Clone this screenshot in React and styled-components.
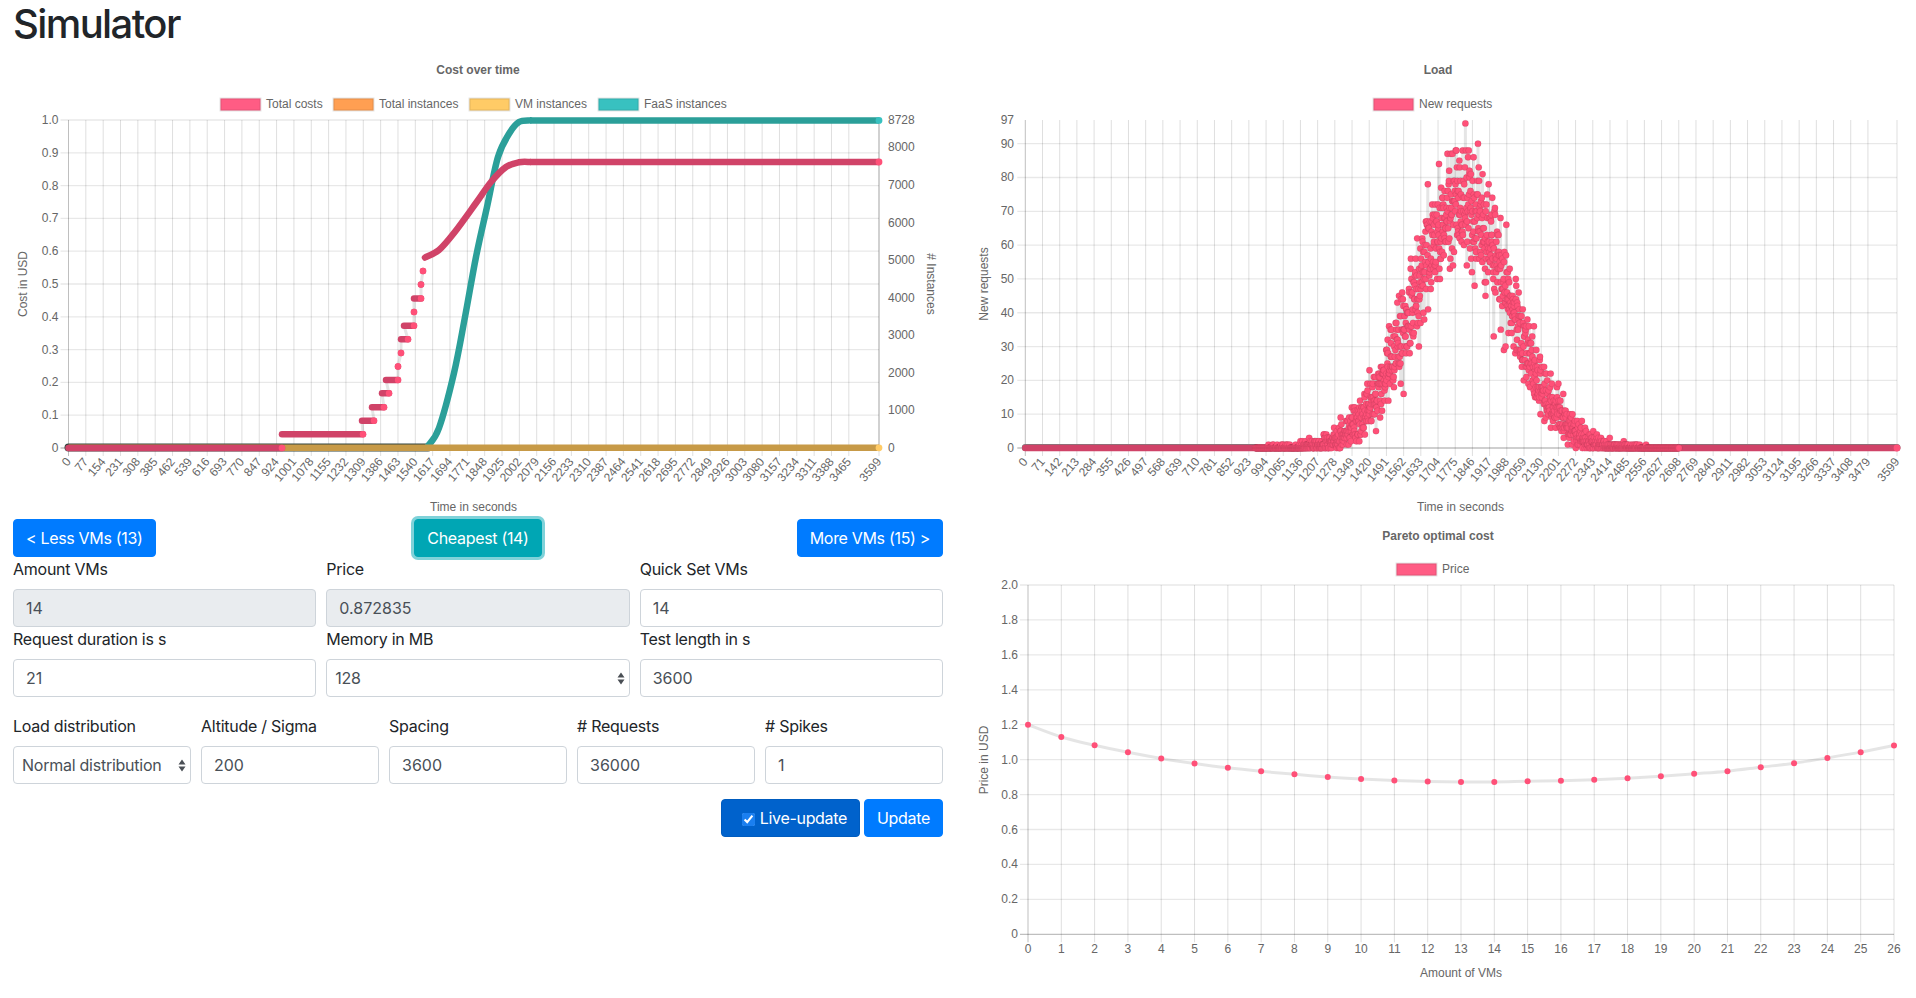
import React from 'react'
import styled, { createGlobalStyle } from 'styled-components'

const GlobalStyle = createGlobalStyle`
  * { box-sizing: border-box; }
  body {
    margin: 0;
    background: #fff;
    color: #212529;
    font-family: Inter, "Noto Sans", sans-serif;
    font-size: 16px;
  }
`

const Page = styled.div`
  display: grid;
  grid-template-columns: 930px 926px;
  column-gap: 31px;
  padding: 0 16px 0 13px;
`

const LeftCol = styled.div`
  display: flex;
  flex-direction: column;
`

const RightCol = styled.div`
  display: flex;
  flex-direction: column;
  padding-top: 56px;
`

const Title = styled.h1`
  margin: 0 0 8px;
  font-size: 40px;
  line-height: 48px;
  font-weight: 500;
  letter-spacing: -1.6px;
`

const ChartSvg = styled.svg`
  display: block;
  overflow: visible;
`

const ChartTitle = styled.text`
  font: bold 12px "Liberation Sans", Arial, sans-serif;
  fill: #666;
  text-anchor: middle;
`

const ChartLabel = styled.text`
  font: 12px "Liberation Sans", Arial, sans-serif;
  fill: #666;
  text-anchor: ${(p) => p.$anchor || 'middle'};
`

const ButtonRow = styled.div`
  display: grid;
  grid-template-columns: 1fr auto 1fr;
  align-items: center;
  height: 38px;
`

const Btn = styled.button`
  height: 38px;
  padding: 0 12px;
  border: 1px solid ${(p) => (p.$variant === 'teal' ? '#00a6b4' : p.$variant === 'active' ? '#005cbf' : '#007bff')};
  border-radius: 4px;
  background: ${(p) => (p.$variant === 'teal' ? '#00a6b4' : p.$variant === 'active' ? '#0062cc' : '#007bff')};
  box-shadow: ${(p) => (p.$variant === 'teal' ? '0 0 0 3px rgba(0, 166, 180, 0.5)' : 'none')};
  color: #fff;
  font: 400 16px/24px Inter, "Noto Sans", sans-serif;
  letter-spacing: -0.32px;
  justify-self: ${(p) => p.$side || 'center'};
  display: inline-flex;
  align-items: center;
  white-space: nowrap;
`

const FieldGrid = styled.div`
  display: grid;
  grid-template-columns: repeat(${(p) => p.$cols}, 1fr);
  column-gap: 10px;
  margin-top: ${(p) => p.$top || 0}px;
`

const Field = styled.div`
  display: flex;
  flex-direction: column;
  min-width: 0;
`

const Label = styled.label`
  display: block;
  margin-bottom: 8px;
  line-height: 24px;
  letter-spacing: -0.25px;
`

const Input = styled.input`
  width: 100%;
  height: 38px;
  padding: 6px 12px;
  border: 1px solid #ced4da;
  border-radius: 4px;
  background: ${(p) => (p.disabled ? '#e9ecef' : '#fff')};
  color: #495057;
  font: 400 16px/24px Inter, "Noto Sans", sans-serif;
  opacity: 1;
  -webkit-text-fill-color: #495057;
`

const SelectWrap = styled.div`
  position: relative;
`

const Select = styled.select`
  width: 100%;
  height: 38px;
  padding: 6px 20px 6px 8px;
  border: 1px solid #ced4da;
  border-radius: 4px;
  background: #fff;
  color: #495057;
  font: 400 16px/24px Inter, "Noto Sans", sans-serif;
  letter-spacing: -0.25px;
  appearance: none;
`

const SelectArrows = styled.svg`
  position: absolute;
  right: 5px;
  top: 13px;
  pointer-events: none;
`

const ActionRow = styled.div`
  display: flex;
  justify-content: flex-end;
  gap: 4px;
  margin-top: 15px;
`

const LiveCheck = styled.input`
  width: 13px;
  height: 13px;
  margin: 3px 5px 0 8px;
  accent-color: #1a7ff0;
`

const TEAL = '#2b9f99'
const ROSE = '#d04368'
const PINK = '#ff5078'
const AMBER = '#c79a47'
const GRID_V = 'rgba(0,0,0,0.13)'
const GRID_H = 'rgba(0,0,0,0.09)'
const AXIS = 'rgba(0,0,0,0.25)'

// catmull-rom through the points, so few points still give a round curve
const smooth = (pts) => {
  let d = `M${pts[0][0]} ${pts[0][1]}`
  for (let i = 0; i < pts.length - 1; i++) {
    const p0 = pts[i - 1] || pts[i]
    const p1 = pts[i]
    const p2 = pts[i + 1]
    const p3 = pts[i + 2] || p2
    const c1 = [p1[0] + (p2[0] - p0[0]) / 6, p1[1] + (p2[1] - p0[1]) / 6]
    const c2 = [p2[0] - (p3[0] - p1[0]) / 6, p2[1] - (p3[1] - p1[1]) / 6]
    d += ` C${c1[0]} ${c1[1]} ${c2[0]} ${c2[1]} ${p2[0]} ${p2[1]}`
  }
  return d
}

const makeTicks = (step, last) => {
  const out = []
  for (let v = 0; v < last - step; v += step) out.push(v)
  out.push(last)
  return out
}

const LegendItem = ({ x, y, color, label, w = 40 }) => (
  <g>
    <rect x={x + 0.5} y={y - 5.5} width={w} height={12} fill={color} stroke="rgba(0,0,0,0.1)" strokeWidth="2" />
    <ChartLabel $anchor="start" x={x + w + 6} y={y + 4}>{label}</ChartLabel>
  </g>
)

const VGrid = ({ xs, top, bottom }) =>
  xs.map((x, i) => (
    <line key={i} x1={x} x2={x} y1={top} y2={bottom + 8} stroke={i === 0 ? AXIS : GRID_V} />
  ))

const HGrid = ({ ys, left, right }) =>
  ys.map((y, i) => (
    <line key={i} x1={left - 8} x2={right} y1={y} y2={y} stroke={i === 0 ? AXIS : GRID_H} strokeWidth="1.3" />
  ))

const RotatedTicks = ({ ticks, toX, y }) =>
  ticks.map((t) => {
    const x = toX(t) + 3
    return (
      <ChartLabel key={t} $anchor="end" x={x} y={y} transform={`rotate(-50 ${x} ${y})`}>{t}</ChartLabel>
    )
  })

const SideTitle = ({ x, y, dir = -90, children }) => (
  <ChartLabel x={x} y={y} transform={`rotate(${dir} ${x} ${y})`}>{children}</ChartLabel>
)

const CostChart = () => {
  const L = 68.5
  const R = 879
  const T = 120
  const B = 448
  const toX = (t) => L + (t / 3599) * (R - L)
  const xTicks = makeTicks(77, 3599)
  const costY = (v) => B - v * (B - T)
  const instY = (v) => B - (v / 8728) * (B - T)

  const steps = [
    [282, 363, 434.3],
    [362, 374, 420.7],
    [372, 384, 407.3],
    [382, 389, 393.3],
    [386, 398, 380],
    [398, 398, 366.5],
    [401, 401, 353],
    [401, 408, 339.3],
    [404, 414, 325.7],
    [414, 414, 312],
    [414, 421, 298.4],
    [421, 421, 284.6],
    [423, 423, 271],
  ]
  const costCurve = [[425, 257.5], [439, 250], [454, 233], [476, 203], [491, 182], [506, 167], [519, 162.3], [530, 162]]
  const faasCurve = [[428, 446], [439, 428], [454, 373], [465, 317], [476, 257], [487, 207], [498, 157], [509.5, 133], [519, 122], [530, 120.4]]
  const grayPts = steps.map((s) => `${s[0]},${s[2]} ${s[1]},${s[2]}`).join(' ')

  return (
    <ChartSvg width="930" height="463" viewBox="13 56 930 463">
      <ChartTitle x="478" y="74">Cost over time</ChartTitle>
      <LegendItem x={220} y={104} color="#ff5c84" label="Total costs" />
      <LegendItem x={333} y={104} color="#ff9f52" label="Total instances" />
      <LegendItem x={469} y={104} color="#ffcb66" label="VM instances" />
      <LegendItem x={598} y={104} color="#38c1c0" label="FaaS instances" />

      <VGrid xs={xTicks.map(toX)} top={T} bottom={B} />
      <HGrid ys={[0, 0.1, 0.2, 0.3, 0.4, 0.5, 0.6, 0.7, 0.8, 0.9, 1].map(costY)} left={L} right={R} />
      <line x1={R} x2={R} y1={T} y2={B} stroke={AXIS} />

      {['0', '0.1', '0.2', '0.3', '0.4', '0.5', '0.6', '0.7', '0.8', '0.9', '1.0'].map((t) => (
        <ChartLabel key={t} $anchor="end" x="58.5" y={costY(+t) + 4}>{t}</ChartLabel>
      ))}
      {[0, 1000, 2000, 3000, 4000, 5000, 6000, 7000, 8000, 8728].map((t) => (
        <ChartLabel key={t} $anchor="start" x="888" y={instY(t) + 4}>{t}</ChartLabel>
      ))}
      <RotatedTicks ticks={xTicks} toX={toX} y={462} />
      <SideTitle x={27} y={284}>Cost in USD</SideTitle>
      <SideTitle x={927} y={284} dir={90}># Instances</SideTitle>
      <ChartLabel x="473.5" y="511">Time in seconds</ChartLabel>

      {/* faas instances */}
      <path d={`M${L} 447.6 H428`} stroke="#33443f" strokeWidth="8" strokeLinecap="round" fill="none" />
      <path d={smooth(faasCurve)} stroke={TEAL} strokeWidth="6.5" strokeLinecap="round" fill="none" />
      <path d={`M530 120.4 H${R}`} stroke={TEAL} strokeWidth="6.5" fill="none" />
      <circle cx={R} cy="120.4" r="3.4" fill="#38c1c0" />

      {/* vm instances */}
      <path d={`M${L} 447.8 H${R}`} stroke={AMBER} strokeWidth="6.5" fill="none" />
      <circle cx={R} cy="447.8" r="3.4" fill="#ffcb66" />

      {/* total costs */}
      <polyline points={grayPts} stroke="rgba(0,0,0,0.1)" strokeWidth="3" fill="none" />
      <path d={`M${L} 448 H282`} stroke={ROSE} strokeWidth="6.5" strokeLinecap="round" fill="none" />
      <circle cx="282" cy="448" r="3.3" fill={PINK} />
      {steps.map((s, i) => (
        <g key={i}>
          <path d={`M${s[0]} ${s[2]} H${s[1]}`} stroke={ROSE} strokeWidth="6.5" strokeLinecap="round" fill="none" />
          <circle cx={s[1]} cy={s[2]} r="3.2" fill={PINK} />
        </g>
      ))}
      <path d={smooth(costCurve)} stroke={ROSE} strokeWidth="6.5" strokeLinecap="round" fill="none" />
      <path d={`M530 162 H${R}`} stroke={ROSE} strokeWidth="6.5" fill="none" />
      <circle cx={R} cy="162" r="3.4" fill={PINK} />
    </ChartSvg>
  )
}

// small seeded generator so the scatter looks the same on each load
const seeded = (seed) => () => {
  seed |= 0
  seed = (seed + 0x6d2b79f5) | 0
  let t = Math.imul(seed ^ (seed >>> 15), 1 | seed)
  t = (t + Math.imul(t ^ (t >>> 7), 61 | t)) ^ t
  return ((t ^ (t >>> 14)) >>> 0) / 4294967296
}

const loadData = (() => {
  const rnd = seeded(4711)
  const out = []
  for (let i = 0; i < 3600; i++) {
    const lambda = 71.8 * Math.exp(-((i - 1800) ** 2) / (2 * 200 * 200))
    let v
    if (lambda < 30) {
      const limit = Math.exp(-lambda)
      let k = 0
      let p = 1
      do {
        k++
        p *= rnd()
      } while (p > limit)
      v = k - 1
    } else {
      const z = Math.sqrt(-2 * Math.log(rnd() || 0.5)) * Math.cos(2 * Math.PI * rnd())
      v = Math.round(lambda + z * Math.sqrt(lambda))
    }
    out.push(Math.min(v, 88))
  }
  out[1817] = 96
  out[1869] = 90
  out[1900] = 45
  out[1855] = 48
  return out
})()

const LoadChart = () => {
  const L = 1025.3
  const R = 1897
  const T = 120
  const B = 448
  const toX = (t) => L + (t / 3599) * (R - L)
  const toY = (v) => B - (v / 97) * (B - T)
  const xTicks = makeTicks(71, 3599)
  const yTicks = [0, 10, 20, 30, 40, 50, 60, 70, 80, 90]
  const line = []
  const dots = []
  for (let i = 950; i < 2700; i++) {
    line.push(`${toX(i).toFixed(1)},${toY(loadData[i]).toFixed(1)}`)
    dots.push(i)
  }

  return (
    <ChartSvg width="926" height="465" viewBox="974 56 926 465">
      <ChartTitle x="1438" y="74">Load</ChartTitle>
      <LegendItem x={1373} y={104} color="#ff5c84" label="New requests" />

      <VGrid xs={xTicks.map(toX)} top={T} bottom={B} />
      <HGrid ys={yTicks.map(toY)} left={L} right={R} />

      {yTicks.concat(97).map((t) => (
        <ChartLabel key={t} $anchor="end" x="1014" y={toY(t) + 4}>{t}</ChartLabel>
      ))}
      <RotatedTicks ticks={xTicks} toX={toX} y={462} />
      <SideTitle x={988} y={284}>New requests</SideTitle>
      <ChartLabel x="1460.5" y="511">Time in seconds</ChartLabel>

      <polyline points={line.join(' ')} stroke="rgba(0,0,0,0.1)" strokeWidth="3" fill="none" />
      <path d={`M${L} 447.5 H${toX(950)} M${toX(2700)} 447.5 H${R}`} stroke="#7c7c7c" strokeWidth="7" strokeLinecap="round" fill="none" />
      <path d={`M${L} 448 H${toX(950)} M${toX(2700)} 448 H${R}`} stroke={ROSE} strokeWidth="6.5" strokeLinecap="round" fill="none" />
      {dots.map((i) => (
        <circle key={i} cx={toX(i)} cy={toY(loadData[i])} r="3.2" fill={PINK} stroke="rgba(0,0,0,0.08)" />
      ))}
      <circle cx={R} cy="448" r="3.4" fill={PINK} />
    </ChartSvg>
  )
}

const priceData = [
  1.2, 1.13, 1.082, 1.042, 1.007, 0.978, 0.953, 0.933, 0.916, 0.9, 0.889, 0.881, 0.875, 0.872,
  0.872, 0.876, 0.879, 0.885, 0.894, 0.905, 0.919, 0.934, 0.957, 0.98, 1.01, 1.043, 1.081,
]

const ParetoChart = () => {
  const L = 1028
  const R = 1894
  const T = 585
  const B = 934.3
  const toX = (t) => L + (t / 26) * (R - L)
  const toY = (v) => B - (v / 2) * (B - T)
  const yTicks = [0, 0.2, 0.4, 0.6, 0.8, 1, 1.2, 1.4, 1.6, 1.8, 2]
  const pts = priceData.map((v, i) => [toX(i), toY(v)])

  return (
    <ChartSvg width="926" height="465" viewBox="974 521 926 465">
      <ChartTitle x="1438" y="540">Pareto optimal cost</ChartTitle>
      <LegendItem x={1396} y={569} color="#ff5c84" label="Price" />

      <VGrid xs={priceData.map((_, i) => toX(i))} top={T} bottom={B} />
      <HGrid ys={yTicks.map(toY)} left={L} right={R} />

      {yTicks.map((t) => (
        <ChartLabel key={t} $anchor="end" x="1018" y={toY(t) + 4}>{t === 0 ? '0' : t.toFixed(1)}</ChartLabel>
      ))}
      {priceData.map((_, i) => (
        <ChartLabel key={i} x={toX(i)} y="953">{i}</ChartLabel>
      ))}
      <SideTitle x={988} y={760}>Price in USD</SideTitle>
      <ChartLabel x="1461" y="977">Amount of VMs</ChartLabel>

      <path d={smooth(pts)} stroke="rgba(0,0,0,0.1)" strokeWidth="3" fill="none" />
      {pts.map((p, i) => (
        <circle key={i} cx={p[0]} cy={p[1]} r="3" fill={PINK} />
      ))}
    </ChartSvg>
  )
}

const TextField = ({ label, value, disabled }) => (
  <Field>
    <Label>{label}</Label>
    <Input type="text" defaultValue={value} disabled={disabled} />
  </Field>
)

const SelectField = ({ label, options }) => (
  <Field>
    <Label>{label}</Label>
    <SelectWrap>
      <Select defaultValue={options[0]}>
        {options.map((o) => (
          <option key={o}>{o}</option>
        ))}
      </Select>
      <SelectArrows width="8" height="13" viewBox="0 0 8 13">
        <path d="M4 0.5 L7.5 5.5 H0.5 Z M4 12.5 L7.5 7.5 H0.5 Z" fill="#4a4f55" />
      </SelectArrows>
    </SelectWrap>
  </Field>
)

export default function App() {
  return (
    <>
      <GlobalStyle />
      <Page>
        <LeftCol>
          <Title>Simulator</Title>
          <CostChart />
          <ButtonRow>
            <Btn $side="start">&lt; Less VMs (13)</Btn>
            <Btn $variant="teal">Cheapest (14)</Btn>
            <Btn $side="end">More VMs (15) &gt;</Btn>
          </ButtonRow>
          <FieldGrid $cols={3}>
            <TextField label="Amount VMs" value="14" disabled />
            <TextField label="Price" value="0.872835" disabled />
            <TextField label="Quick Set VMs" value="14" />
          </FieldGrid>
          <FieldGrid $cols={3}>
            <TextField label="Request duration is s" value="21" />
            <SelectField label="Memory in MB" options={['128', '256', '512']} />
            <TextField label="Test length in s" value="3600" />
          </FieldGrid>
          <FieldGrid $cols={5} $top={17}>
            <SelectField label="Load distribution" options={['Normal distribution', 'Spikes']} />
            <TextField label="Altitude / Sigma" value="200" />
            <TextField label="Spacing" value="3600" />
            <TextField label="# Requests" value="36000" />
            <TextField label="# Spikes" value="1" />
          </FieldGrid>
          <ActionRow>
            <Btn $variant="active">
              <LiveCheck type="checkbox" defaultChecked />
              Live-update
            </Btn>
            <Btn>Update</Btn>
          </ActionRow>
        </LeftCol>
        <RightCol>
          <LoadChart />
          <ParetoChart />
        </RightCol>
      </Page>
    </>
  )
}
